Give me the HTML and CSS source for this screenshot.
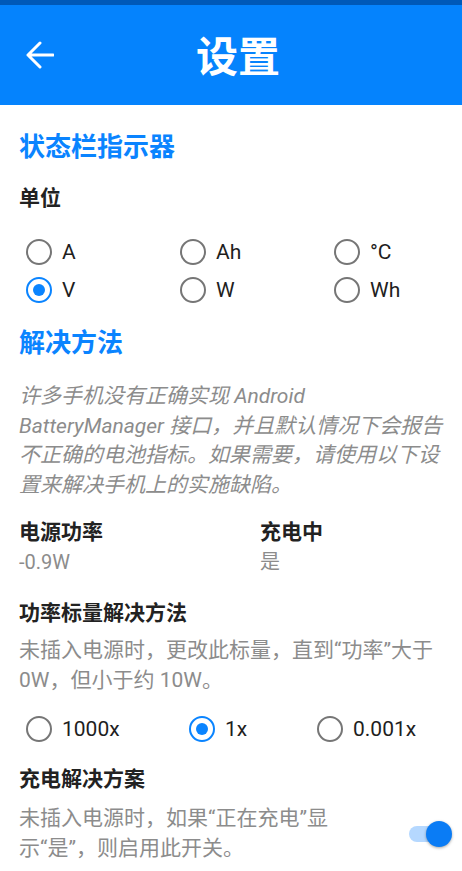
FILE: index.html
```html
<!DOCTYPE html>
<html lang="zh-CN">
<head>
<meta charset="utf-8">
<title>设置</title>
<link rel="stylesheet" href="styles.css">
</head>
<body>
<div class="statusbar"></div>
<header class="appbar">
  <svg class="back" viewBox="0 0 28 28" width="28" height="28" aria-hidden="true">
    <path d="M2 14 H27 M14 2 L2 14 L14 26" fill="none" stroke="#fff" stroke-width="3" stroke-linecap="round" stroke-linejoin="round"/>
  </svg>
  <h1 class="title">设置</h1>
</header>
<main class="content">
  <h2 class="section">状态栏指示器</h2>
  <div class="label unit-label">单位</div>
  <div class="radio-grid">
    <div class="radio"><span class="dot"></span><span>A</span></div>
    <div class="radio"><span class="dot"></span><span>Ah</span></div>
    <div class="radio"><span class="dot"></span><span>°C</span></div>
    <div class="radio"><span class="dot on"></span><span>V</span></div>
    <div class="radio"><span class="dot"></span><span>W</span></div>
    <div class="radio"><span class="dot"></span><span>Wh</span></div>
  </div>

  <h2 class="section section2">解决方法</h2>
  <p class="intro">许多手机没有正确实现 Android BatteryManager 接口，并且默认情况下会报告不正确的电池指标。如果需要，请使用以下设置来解决手机上的实施缺陷。</p>

  <div class="stats">
    <div class="stat">
      <div class="label">电源功率</div>
      <div class="value">-0.9W</div>
    </div>
    <div class="stat">
      <div class="label">充电中</div>
      <div class="value">是</div>
    </div>
  </div>

  <div class="label scale-label">功率标量解决方法</div>
  <p class="desc scale-desc">未插入电源时，更改此标量，直到“功率”大于 0W，但小于约 10W。</p>
  <div class="radio-row">
    <div class="radio"><span class="dot"></span><span>1000x</span></div>
    <div class="radio"><span class="dot on"></span><span>1x</span></div>
    <div class="radio"><span class="dot"></span><span>0.001x</span></div>
  </div>

  <div class="label charge-label">充电解决方案</div>
  <div class="switch-row">
    <p class="desc charge-desc">未插入电源时，如果“正在充电”显示“是”，则启用此开关。</p>
    <div class="switch"><span class="track"></span><span class="thumb"></span></div>
  </div>
</main>
</body>
</html>
```
FILE: styles.css
```css
html, body {
  margin: 0;
  padding: 0;
  background: #ffffff;
}
body {
  font-family: Roboto, "Noto Sans CJK SC", sans-serif;
  color: #222222;
}
.statusbar {
  height: 5px;
  background: #0059b8;
}
.appbar {
  box-sizing: border-box;
  height: 100px;
  background: #0583fd;
  display: flex;
  align-items: center;
  padding: 5px 26px 0;
}
.back {
  flex: none;
  display: block;
  margin-top: -5px;
}
.title {
  flex: 1;
  margin: 0;
  padding-right: 14px;
  text-align: center;
  color: #ffffff;
  font-size: 42px;
  font-weight: 700;
  line-height: 50px;
}
.content {
  padding: 0 19px;
}
.section {
  margin: 26px 0 0;
  font-size: 26px;
  line-height: 32px;
  font-weight: 700;
  color: #0a84ff;
}
.section2 {
  margin-top: 18px;
}
.label {
  font-size: 21px;
  line-height: 30px;
  font-weight: 700;
  color: #222222;
}
.unit-label {
  margin-top: 21px;
  line-height: 28px;
}
.radio-grid {
  margin-top: 21px;
  padding-left: 7px;
  display: grid;
  grid-template-columns: 154px 154px 1fr;
  grid-auto-rows: 38px;
}
.radio {
  display: flex;
  align-items: center;
  gap: 10px;
  font-size: 21px;
  color: #1e1e1e;
}
.dot {
  box-sizing: border-box;
  width: 26px;
  height: 26px;
  border: 2.5px solid #767676;
  border-radius: 50%;
  display: flex;
  align-items: center;
  justify-content: center;
  flex: none;
}
.dot.on {
  border-color: #0a84ff;
}
.dot.on::after {
  content: "";
  width: 12px;
  height: 12px;
  border-radius: 50%;
  background: #0a84ff;
}
.intro {
  margin: 23px 0 0;
  font-size: 21px;
  line-height: 29.5px;
  font-style: italic;
  color: #8c8c8c;
}
.stats {
  margin-top: 17px;
  display: grid;
  grid-template-columns: 241px 1fr;
}
.value {
  font-size: 20px;
  line-height: 30px;
  color: #8c8c8c;
}
.scale-label {
  margin-top: 21px;
}
.desc {
  margin: 0;
  font-size: 21px;
  line-height: 30px;
  color: #8c8c8c;
}
.scale-desc {
  margin-top: 7px;
}
.radio-row {
  margin-top: 15px;
  padding-left: 7px;
  display: grid;
  grid-template-columns: 163px 128px 1fr;
  height: 38px;
}
.charge-label {
  margin-top: 16px;
}
.switch-row {
  margin-top: 10px;
  display: flex;
  align-items: center;
  justify-content: space-between;
}
.charge-desc {
  width: 320px;
  line-height: 29.5px;
}
.switch {
  position: relative;
  width: 43px;
  height: 26px;
  margin-right: -9px;
  flex: none;
}
.track {
  position: absolute;
  left: 0;
  top: 5px;
  width: 32px;
  height: 16px;
  border-radius: 8px;
  background: #b5d8ff;
}
.thumb {
  position: absolute;
  right: 0;
  top: 0;
  width: 26px;
  height: 26px;
  border-radius: 50%;
  background: #0a7cf5;
  box-shadow: 0 1px 3px rgba(0, 0, 0, 0.35);
}
```
